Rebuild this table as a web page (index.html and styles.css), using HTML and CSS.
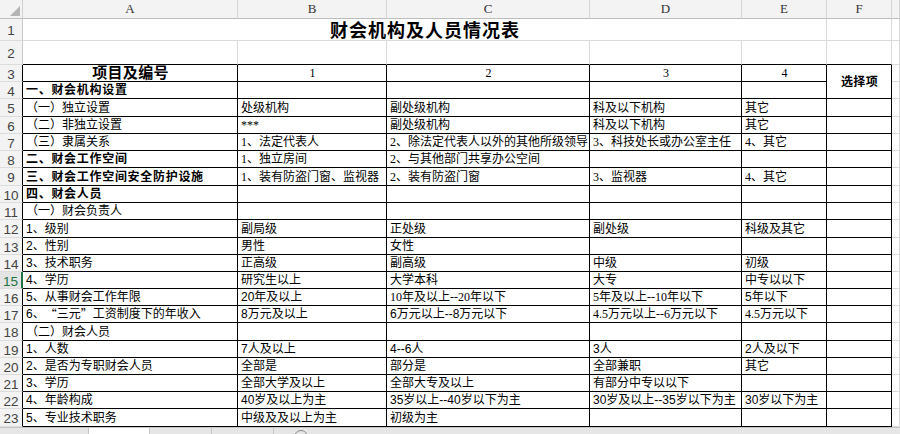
FILE: index.html
```html
<!DOCTYPE html>
<html lang="zh">
<head>
<meta charset="utf-8">
<title>财会机构及人员情况表</title>
<link rel="stylesheet" href="styles.css">
</head>
<body>
<div class="sheet">
  <!-- column headers -->
  <div class="corner"><svg width="22" height="18" viewBox="0 0 22 18"><polygon points="20,6 20,16 10,16" fill="#b4b4b4"/></svg></div>
  <div class="ch">A</div><div class="ch">B</div><div class="ch">C</div><div class="ch">D</div><div class="ch">E</div><div class="ch">F</div><div class="ch"></div>

  <!-- row 1 -->
  <div class="rh">1</div>
  <div class="cell title">财会机构及人员情况表</div>
  <div class="cell"></div><div class="cell"></div>

  <!-- row 2 -->
  <div class="rh">2</div>
  <div class="cell eb"></div><div class="cell eb"></div><div class="cell eb"></div><div class="cell eb"></div><div class="cell eb"></div><div class="cell eb"></div><div class="cell"></div>

  <!-- row 3 -->
  <div class="rh rk">3</div>
  <div class="cell tb head">项目及编号</div>
  <div class="cell tb ctr sf">1</div>
  <div class="cell tb ctr sf">2</div>
  <div class="cell tb ctr sf">3</div>
  <div class="cell tb ctr sf">4</div>
  <div class="cell tb ctr bd pick">选择项</div>
  <div class="cell"></div>

  <!-- row 4 -->
  <div class="rh rk">4</div>
  <div class="cell tb bd">一、财会机构设置</div>
  <div class="cell tb"></div><div class="cell tb"></div><div class="cell tb"></div><div class="cell tb"></div>
  <div class="cell"></div>

  <!-- row 5 -->
  <div class="rh rk">5</div>
  <div class="cell tb">（一）独立设置</div>
  <div class="cell tb">处级机构</div>
  <div class="cell tb">副处级机构</div>
  <div class="cell tb">科及以下机构</div>
  <div class="cell tb">其它</div>
  <div class="cell tb"></div><div class="cell"></div>

  <!-- row 6 -->
  <div class="rh rk">6</div>
  <div class="cell tb">（二）非独立设置</div>
  <div class="cell tb sf">***</div>
  <div class="cell tb">副处级机构</div>
  <div class="cell tb">科及以下机构</div>
  <div class="cell tb">其它</div>
  <div class="cell tb"></div><div class="cell"></div>

  <!-- row 7 -->
  <div class="rh rk">7</div>
  <div class="cell tb">（三）隶属关系</div>
  <div class="cell tb sf">1、法定代表人</div>
  <div class="cell tb sf">2、除法定代表人以外的其他所级领导</div>
  <div class="cell tb sf">3、科技处长或办公室主任</div>
  <div class="cell tb sf">4、其它</div>
  <div class="cell tb"></div><div class="cell"></div>

  <!-- row 8 -->
  <div class="rh rk">8</div>
  <div class="cell tb bd">二、财会工作空间</div>
  <div class="cell tb sf">1、独立房间</div>
  <div class="cell tb sf">2、与其他部门共享办公空间</div>
  <div class="cell tb"></div>
  <div class="cell tb"></div>
  <div class="cell tb"></div><div class="cell"></div>

  <!-- row 9 -->
  <div class="rh rk">9</div>
  <div class="cell tb bd">三、财会工作空间安全防护设施</div>
  <div class="cell tb sf">1、装有防盗门窗、监视器</div>
  <div class="cell tb sf">2、装有防盗门窗</div>
  <div class="cell tb sf">3、监视器</div>
  <div class="cell tb sf">4、其它</div>
  <div class="cell tb"></div><div class="cell"></div>

  <!-- row 10 -->
  <div class="rh rk">10</div>
  <div class="cell tb bd">四、财会人员</div>
  <div class="cell tb"></div><div class="cell tb"></div><div class="cell tb"></div><div class="cell tb"></div><div class="cell tb"></div><div class="cell"></div>

  <!-- row 11 -->
  <div class="rh rk">11</div>
  <div class="cell tb">（一）财会负责人</div>
  <div class="cell tb"></div><div class="cell tb"></div><div class="cell tb"></div><div class="cell tb"></div><div class="cell tb"></div><div class="cell"></div>

  <!-- row 12 -->
  <div class="rh rk">12</div>
  <div class="cell tb">1、级别</div>
  <div class="cell tb">副局级</div>
  <div class="cell tb">正处级</div>
  <div class="cell tb">副处级</div>
  <div class="cell tb">科级及其它</div>
  <div class="cell tb"></div><div class="cell"></div>

  <!-- row 13 -->
  <div class="rh rk">13</div>
  <div class="cell tb">2、性别</div>
  <div class="cell tb">男性</div>
  <div class="cell tb">女性</div>
  <div class="cell tb"></div>
  <div class="cell tb"></div>
  <div class="cell tb"></div><div class="cell"></div>

  <!-- row 14 -->
  <div class="rh rk">14</div>
  <div class="cell tb">3、技术职务</div>
  <div class="cell tb">正高级</div>
  <div class="cell tb">副高级</div>
  <div class="cell tb">中级</div>
  <div class="cell tb">初级</div>
  <div class="cell tb"></div><div class="cell"></div>

  <!-- row 15 -->
  <div class="rh rk sel">15</div>
  <div class="cell tb">4、学历</div>
  <div class="cell tb">研究生以上</div>
  <div class="cell tb">大学本科</div>
  <div class="cell tb">大专</div>
  <div class="cell tb">中专以以下</div>
  <div class="cell tb"></div><div class="cell"></div>

  <!-- row 16 -->
  <div class="rh rk">16</div>
  <div class="cell tb">5、从事财会工作年限</div>
  <div class="cell tb">20年及以上</div>
  <div class="cell tb sf">10年及以上--20年以下</div>
  <div class="cell tb sf">5年及以上--10年以下</div>
  <div class="cell tb">5年以下</div>
  <div class="cell tb"></div><div class="cell"></div>

  <!-- row 17 -->
  <div class="rh rk">17</div>
  <div class="cell tb">6、<span class="cj">“</span>三元<span class="cj">”</span>工资制度下的年收入</div>
  <div class="cell tb">8万元及以上</div>
  <div class="cell tb">6万元以上--8万元以下</div>
  <div class="cell tb sf">4.5万元以上--6万元以下</div>
  <div class="cell tb sf">4.5万元以下</div>
  <div class="cell tb"></div><div class="cell"></div>

  <!-- row 18 -->
  <div class="rh rk">18</div>
  <div class="cell tb">（二）财会人员</div>
  <div class="cell tb"></div><div class="cell tb"></div><div class="cell tb"></div><div class="cell tb"></div><div class="cell tb"></div><div class="cell"></div>

  <!-- row 19 -->
  <div class="rh rk">19</div>
  <div class="cell tb">1、人数</div>
  <div class="cell tb">7人及以上</div>
  <div class="cell tb">4--6人</div>
  <div class="cell tb">3人</div>
  <div class="cell tb">2人及以下</div>
  <div class="cell tb"></div><div class="cell"></div>

  <!-- row 20 -->
  <div class="rh rk">20</div>
  <div class="cell tb">2、是否为专职财会人员</div>
  <div class="cell tb">全部是</div>
  <div class="cell tb">部分是</div>
  <div class="cell tb">全部兼职</div>
  <div class="cell tb">其它</div>
  <div class="cell tb"></div><div class="cell"></div>

  <!-- row 21 -->
  <div class="rh rk">21</div>
  <div class="cell tb">3、学历</div>
  <div class="cell tb">全部大学及以上</div>
  <div class="cell tb">全部大专及以上</div>
  <div class="cell tb">有部分中专以以下</div>
  <div class="cell tb"></div>
  <div class="cell tb"></div><div class="cell"></div>

  <!-- row 22 -->
  <div class="rh rk">22</div>
  <div class="cell tb">4、年龄构成</div>
  <div class="cell tb">40岁及以上为主</div>
  <div class="cell tb">35岁以上--40岁以下为主</div>
  <div class="cell tb">30岁及以上--35岁以下为主</div>
  <div class="cell tb">30岁以下为主</div>
  <div class="cell tb"></div><div class="cell"></div>

  <!-- row 23 -->
  <div class="rh rk">23</div>
  <div class="cell tb">5、专业技术职务</div>
  <div class="cell tb">中级及及以上为主</div>
  <div class="cell tb">初级为主</div>
  <div class="cell tb"></div>
  <div class="cell tb"></div>
  <div class="cell tb"></div><div class="cell"></div>
</div>
<div class="tabs">
  <div class="tab-gap"></div>
  <div class="tab active"></div>
  <div class="tab"></div>
  <div class="tab"></div>
  <div class="tab-add"></div>
</div>
</body>
</html>
```

FILE: styles.css
```css
html, body {
  margin: 0;
  padding: 0;
  background: #fff;
  overflow: hidden;
}

body {
  width: 900px;
  height: 434px;
  font-family: "Liberation Sans", "Noto Sans CJK SC", sans-serif;
  font-size: 12px;
  color: #000;
}

.sheet {
  display: grid;
  grid-template-columns: 23px 215px 149px 203px 152px 85px 65px 8px;
  grid-template-rows: 19px 22px 24px 17px 17px 18px 17px 17px 17px 18px 17px 17px 18px 17px 17px 17px 17px 17px 18px 17px 17px 17px 17px 18px;
  width: 900px;
}

.corner {
  background: #f3f3f3;
  border-right: 1px solid #d0d0d0;
  border-bottom: 1px solid #bdbdbd;
  box-sizing: border-box;
}
.corner svg { display: block; }

.ch {
  box-sizing: border-box;
  background: #f3f3f3;
  border-right: 1px solid #d6d6d6;
  border-bottom: 1px solid #bdbdbd;
  display: flex;
  align-items: center;
  justify-content: center;
  font-family: "Liberation Serif", serif;
  font-size: 13px;
  color: #333;
}

.rh {
  box-sizing: border-box;
  background: #f3f3f3;
  border-right: 1px solid #c8c8c8;
  border-bottom: 1px solid #dcdcdc;
  display: flex;
  align-items: center;
  justify-content: center;
  font-family: "Liberation Sans", sans-serif;
  font-size: 13.5px;
  color: #444;
  padding-top: 2px;
}
.rk { border-right-color: #000; }
.sel {
  color: #217346;
  background: #e4e4e4;
  border-right: 2px solid #217346;
}

.cell {
  box-sizing: border-box;
  border-right: 1px solid #dadada;
  border-bottom: 1px solid #dadada;
  display: flex;
  align-items: center;
  padding: 0 2px 0 3px;
  white-space: nowrap;
  overflow: visible;
  line-height: 14px;
}

.tb {
  border-right-color: #000;
  border-bottom-color: #000;
}
.eb { border-bottom-color: #000; }

.title {
  grid-column: span 5;
  justify-content: center;
  font-weight: 700;
  font-size: 18px;
  letter-spacing: 1px;
  padding-top: 2px;
  line-height: 20px;
}

.head {
  justify-content: center;
  align-items: flex-end;
  font-size: 15px;
  font-weight: 700;
  line-height: 16px;
  letter-spacing: 0.3px;
}

.ctr { justify-content: center; }

.bd {
  font-weight: 700;
  letter-spacing: 0.7px;
}

.pick {
  grid-row: span 2;
  letter-spacing: 0.4px;
}

.sf { font-family: "Liberation Serif", "Noto Sans CJK SC", serif; }
.cj { font-family: "Noto Sans CJK SC", sans-serif; }

.tabs {
  display: flex;
  height: 7px;
  background: #e6e6e6;
  border-top: 1px solid #c6c6c6;
  box-sizing: border-box;
}
.tab-gap { width: 88px; }
.tab {
  width: 62px;
  border-right: 1px solid #c6c6c6;
  box-sizing: border-box;
}
.tab.active {
  background: #fff;
  border-left: 1px solid #c6c6c6;
}
.tab-add {
  width: 14px;
  height: 14px;
  margin: 2px 0 0 20px;
  border: 1px solid #888;
  border-radius: 50%;
  box-sizing: border-box;
}
```
